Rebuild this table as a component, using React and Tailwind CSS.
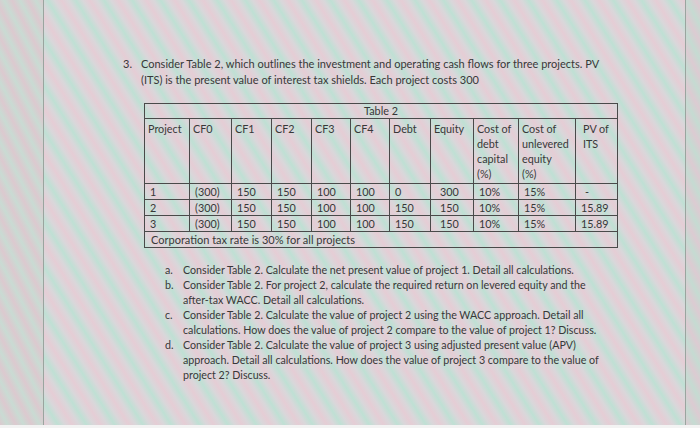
const cols = [45, 42, 40, 40, 39, 39, 41, 43, 45, 57, 42]

const header = [
  ['Project'],
  ['CF0'],
  ['CF1'],
  ['CF2'],
  ['CF3'],
  ['CF4'],
  ['Debt'],
  ['Equity'],
  ['Cost of', 'debt', 'capital', '(%)'],
  ['Cost of', 'unlevered', 'equity', '(%)'],
  ['PV of', 'ITS'],
]

const rows = [
  ['1', '(300)', '150', '150', '100', '100', '0', '300', '10%', '15%', '-'],
  ['2', '(300)', '150', '150', '100', '100', '150', '150', '10%', '15%', '15.89'],
  ['3', '(300)', '150', '150', '100', '100', '150', '150', '10%', '15%', '15.89'],
]

// lines broken where the sheet breaks them
const questions = [
  ['a.', ['Consider Table 2. Calculate the net present value of project 1. Detail all calculations.']],
  ['b.', ['Consider Table 2. For project 2, calculate the required return on levered equity and the', 'after-tax WACC. Detail all calculations.']],
  ['c.', ['Consider Table 2. Calculate the value of project 2 using the WACC approach. Detail all', 'calculations. How does the value of project 2 compare to the value of project 1? Discuss.']],
  ['d.', ['Consider Table 2. Calculate the value of project 3 using adjusted present value (APV)', 'approach. Detail all calculations. How does the value of project 3 compare to the value of', 'project 2? Discuss.']],
]

export default function App() {
  return (
    <div className="w-[700px] h-[428px] overflow-hidden flex flex-col font-['Lato',sans-serif] text-[#383838]">
      <div className="flex flex-1 min-h-0">
        {/* left edge of the sheet */}
        <div className="w-[44px] border-r border-[#9aa59f] bg-[#d3d8d4] bg-[repeating-linear-gradient(62deg,#dcc9cf_0px,#c9dbd3_7px,#dcc9cf_14px)]" />

        <div className="flex-1 bg-[#d9dcd8] bg-[repeating-linear-gradient(58deg,#e5cdd5_0px,#d9d7da_6px,#bfe0d4_12px,#d9d7da_18px,#e5cdd5_24px)]">
          <div className="pt-[56px] pl-[79px] flex text-[11px] leading-[16px]">
            <span className="w-[18px] shrink-0">3.</span>
            <p className="whitespace-nowrap">
              Consider Table 2, which outlines the investment and operating cash flows for three projects. PV
              <br />
              (ITS) is the present value of interest tax shields. Each project costs 300
            </p>
          </div>

          <table className="mt-[15px] ml-[100px] table-fixed border-collapse border border-[#4a4a4a] text-[10.8px] leading-[15px]">
            <colgroup>
              {cols.map((w, i) => (
                <col key={i} style={{ width: w }} />
              ))}
            </colgroup>
            <tbody>
              <tr className="border-b border-[#4a4a4a]">
                <td colSpan={11} className="text-center h-[14px] leading-[14px]">Table 2</td>
              </tr>
              <tr className="border-b border-[#4a4a4a]">
                {header.map((lines, i) => (
                  <td
                    key={i}
                    className={`align-top h-[65px] pt-[2px] whitespace-nowrap border-[#4a4a4a] ${i > 0 ? 'border-l' : ''} ${i === 10 ? 'pl-[7px]' : 'pl-[3px]'}`}
                  >
                    {lines.map((l) => (
                      <div key={l}>{l}</div>
                    ))}
                  </td>
                ))}
              </tr>
              {rows.map((r, ri) => (
                <tr key={ri} className="border-b border-[#4a4a4a] h-[15px]">
                  {r.map((c, i) => (
                    <td
                      key={i}
                      className={`border-[#4a4a4a] ${i > 0 ? 'border-l' : ''} ${i === 10 ? (c === '-' ? 'pl-[9px]' : 'pl-[5px]') : i === 7 ? 'pl-[9px]' : 'pl-[5px]'}`}
                    >
                      {c}
                    </td>
                  ))}
                </tr>
              ))}
              <tr>
                <td colSpan={11} className="pl-[6px] h-[16px] text-[11px]">
                  Corporation tax rate is 30% for all projects
                </td>
              </tr>
            </tbody>
          </table>

          <div className="mt-[14px] ml-[121px] text-[10.7px] leading-[15px] flex flex-col">
            {questions.map(([k, lines]) => (
              <div key={k} className="flex">
                <span className="w-[18px] shrink-0">{k}</span>
                <p className="whitespace-nowrap">
                  {lines.map((l) => (
                    <span key={l} className="block">{l}</span>
                  ))}
                </p>
              </div>
            ))}
          </div>
        </div>

        {/* right edge of the sheet */}
        <div className="w-[15px] border-l border-[#9aa59f] bg-[#d0d8d3] bg-[repeating-linear-gradient(62deg,#dccbd2_0px,#c5dbd2_8px,#dccbd2_16px)]" />
      </div>
      <div className="h-[3px] bg-[#f3f3f3]" />
    </div>
  )
}
